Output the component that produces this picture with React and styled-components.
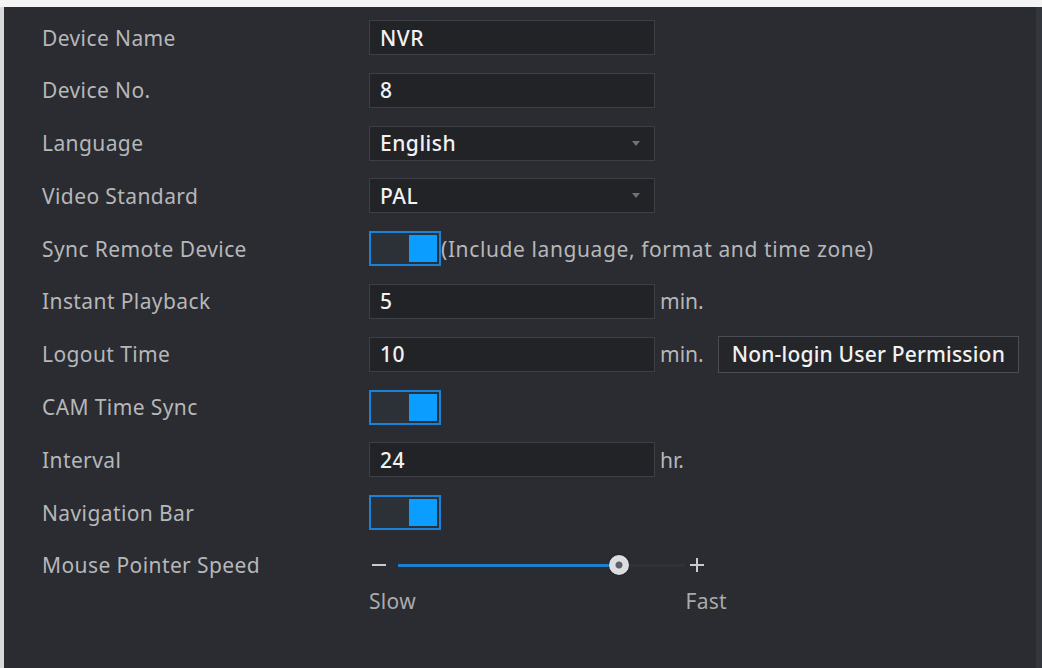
import React from 'react';
import styled, { createGlobalStyle } from 'styled-components';

const GlobalStyle = createGlobalStyle`
  html, body {
    margin: 0;
    padding: 0;
    background: #f4f4f4;
  }
  body {
    font-family: "Noto Sans", "Open Sans", "Liberation Sans", sans-serif;
  }
`;

const Screen = styled.div`
  width: 1042px;
  height: 668px;
  padding-top: 7px;
  box-sizing: border-box;
  display: flex;
  overflow: hidden;
`;

const Edge = styled.div`
  width: 4px;
  background: #d9d9d9;
`;

const Panel = styled.div`
  flex: 1;
  background: #2a2c31;
  border-right: 6px solid #33363c;
  padding: 13px 0 0 38px;
  display: grid;
  grid-template-columns: 327px 1fr;
  grid-auto-rows: 35px;
  row-gap: 17.8px;
  align-items: center;
  align-content: start;
`;

const Label = styled.div`
  color: #b6b7b9;
  font-size: 21px;
  letter-spacing: 0.4px;
`;

const Field = styled.div`
  display: flex;
  align-items: center;
  height: 35px;
`;

const Box = styled.div`
  width: 286px;
  height: 35px;
  box-sizing: border-box;
  background: #212327;
  border: 1px solid #3c3f45;
  color: #f2f2f2;
  font-size: 21px;
  font-weight: 500;
  letter-spacing: 0.5px;
  padding: 0 10px;
  display: flex;
  align-items: center;
  justify-content: space-between;
`;

const Caret = styled.span`
  width: 0;
  height: 0;
  border-left: 4px solid transparent;
  border-right: 4px solid transparent;
  border-top: 5px solid #6f7277;
  margin-right: 4px;
`;

const Unit = styled.span`
  color: #b6b7b9;
  font-size: 21px;
  margin-left: 5px;
`;

const Note = styled.span`
  color: #b6b7b9;
  font-size: 21px;
  letter-spacing: 0.6px;
`;

const Toggle = styled.div`
  width: 72px;
  height: 35px;
  box-sizing: border-box;
  border: 2px solid #1b82da;
  background: #2c3037;
  padding: 2px;
  display: flex;
  justify-content: flex-end;
`;

const Knob = styled.div`
  width: 28px;
  height: 100%;
  background: #0b9dff;
`;

const Button = styled.div`
  margin-left: 14px;
  height: 37px;
  box-sizing: border-box;
  padding: 0 13px;
  border: 1px solid #4a4d53;
  background: #24262a;
  color: #f2f2f2;
  font-size: 21px;
  font-weight: 500;
  letter-spacing: 0.2px;
  display: flex;
  align-items: center;
`;

const SliderWrap = styled.div`
  display: flex;
  flex-direction: column;
  align-self: start;
`;

const SliderLine = styled.div`
  height: 35px;
  display: flex;
  align-items: center;
  width: 340px;
`;

/* minus / plus marks at either end of the track */
const Minus = styled.span`
  width: 14px;
  height: 2px;
  margin: 0 4px 0 3px;
  background: #c9cacc;
`;

const Plus = styled.span`
  position: relative;
  width: 14px;
  height: 14px;
  margin-left: 5px;
  &::before,
  &::after {
    content: '';
    position: absolute;
    background: #c9cacc;
  }
  &::before {
    left: 0;
    right: 0;
    top: 6px;
    height: 2px;
  }
  &::after {
    top: 0;
    bottom: 0;
    left: 6px;
    width: 2px;
  }
`;

const Track = styled.div`
  position: relative;
  height: 3px;
  width: 287px;
  margin-left: 8px;
  background: #2f3238;
`;

const Fill = styled.div`
  height: 100%;
  background: #1e7fc9;
`;

const Thumb = styled.div`
  position: absolute;
  top: 50%;
  width: 20px;
  height: 20px;
  margin: -10px 0 0 -10px;
  border-radius: 50%;
  background: radial-gradient(circle, #5d6066 0 3px, #dcdde0 4px);
  box-shadow: 0 0 2px rgba(0, 0, 0, 0.6);
`;

const Scale = styled.div`
  display: flex;
  justify-content: space-between;
  width: 358px;
  margin-top: 4px;
  color: #a9aaac;
  font-size: 21px;
  letter-spacing: 0.3px;
`;

const SpeedSlider = ({ value }) => (
  <SliderWrap>
    <SliderLine>
      <Minus />
      <Track>
        <Fill style={{ width: `${value}%` }} />
        <Thumb style={{ left: `${value}%` }} />
      </Track>
      <Plus />
    </SliderLine>
    <Scale>
      <span>Slow</span>
      <span>Fast</span>
    </Scale>
  </SliderWrap>
);

const Switch = () => (
  <Toggle>
    <Knob />
  </Toggle>
);

export default function App() {
  return (
    <>
      <GlobalStyle />
      <Screen>
        <Edge />
        <Panel>
          <Label>Device Name</Label>
          <Field><Box>NVR</Box></Field>

          <Label>Device No.</Label>
          <Field><Box>8</Box></Field>

          <Label>Language</Label>
          <Field><Box>English<Caret /></Box></Field>

          <Label>Video Standard</Label>
          <Field><Box>PAL<Caret /></Box></Field>

          <Label>Sync Remote Device</Label>
          <Field>
            <Switch />
            <Note>(Include language, format and time zone)</Note>
          </Field>

          <Label>Instant Playback</Label>
          <Field><Box>5</Box><Unit>min.</Unit></Field>

          <Label>Logout Time</Label>
          <Field>
            <Box>10</Box>
            <Unit>min.</Unit>
            <Button>Non-login User Permission</Button>
          </Field>

          <Label>CAM Time Sync</Label>
          <Field><Switch /></Field>

          <Label>Interval</Label>
          <Field><Box>24</Box><Unit>hr.</Unit></Field>

          <Label>Navigation Bar</Label>
          <Field><Switch /></Field>

          <Label>Mouse Pointer Speed</Label>
          <SpeedSlider value={77} />
        </Panel>
      </Screen>
    </>
  );
}
